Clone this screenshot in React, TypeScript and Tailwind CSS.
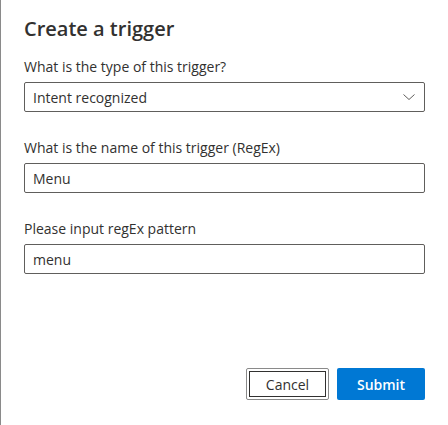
const font = { fontFamily: '"Segoe UI", "Open Sans", "Noto Sans", sans-serif' };

function Field({ label, children }: { label: string; children: React.ReactNode }) {
  return (
    <div>
      <label className="block py-[5px] text-[14px] leading-5 font-medium text-[#323130]">
        {label}
      </label>
      {children}
    </div>
  );
}

function TextInput({ value }: { value: string }) {
  return (
    <div className="h-[30px] border border-[#605e5c] rounded-[2px] px-2 flex items-center text-[14px] text-[#323130]">
      {value}
    </div>
  );
}

export default function App() {
  return (
    <div
      className="h-[425px] w-[448px] bg-white border-l border-[#8a8a8a] pl-[23px] pr-[23px] flex flex-col"
      style={font}
    >
      {/* Title */}
      <h1 className="mt-[15px] text-[20px] leading-7 font-semibold text-[#323130]">
        Create a trigger
      </h1>

      {/* Form */}
      <div className="mt-[9px] flex flex-col gap-[21px]">
        <Field label="What is the type of this trigger?">
          <div className="h-[30px] border border-[#605e5c] rounded-[2px] pl-2 pr-[9px] flex items-center justify-between text-[14px] text-[#323130]">
            <span>Intent recognized</span>
            <svg width="12" height="8" viewBox="0 0 12 8" fill="none" className="text-[#605e5c]">
              <path d="M0.5 1.5 L6 6.5 L11.5 1.5" stroke="currentColor" strokeWidth="1" />
            </svg>
          </div>
        </Field>
        <Field label="What is the name of this trigger (RegEx)">
          <TextInput value="Menu" />
        </Field>
        <Field label="Please input regEx pattern">
          <TextInput value="menu" />
        </Field>
      </div>

      {/* Footer */}
      <div className="mt-auto mb-[25px] flex justify-end gap-2">
        <button className="relative h-8 w-[83px] border border-[#8a8a8a] rounded-[2px] bg-white text-[14px] text-[#323130] after:absolute after:inset-[2px] after:border after:border-[#323130] after:content-['']">
          Cancel
        </button>
        <button className="h-8 w-[88px] rounded-[2px] bg-[#0078d4] text-[14px] font-semibold text-white">
          Submit
        </button>
      </div>
    </div>
  );
}
